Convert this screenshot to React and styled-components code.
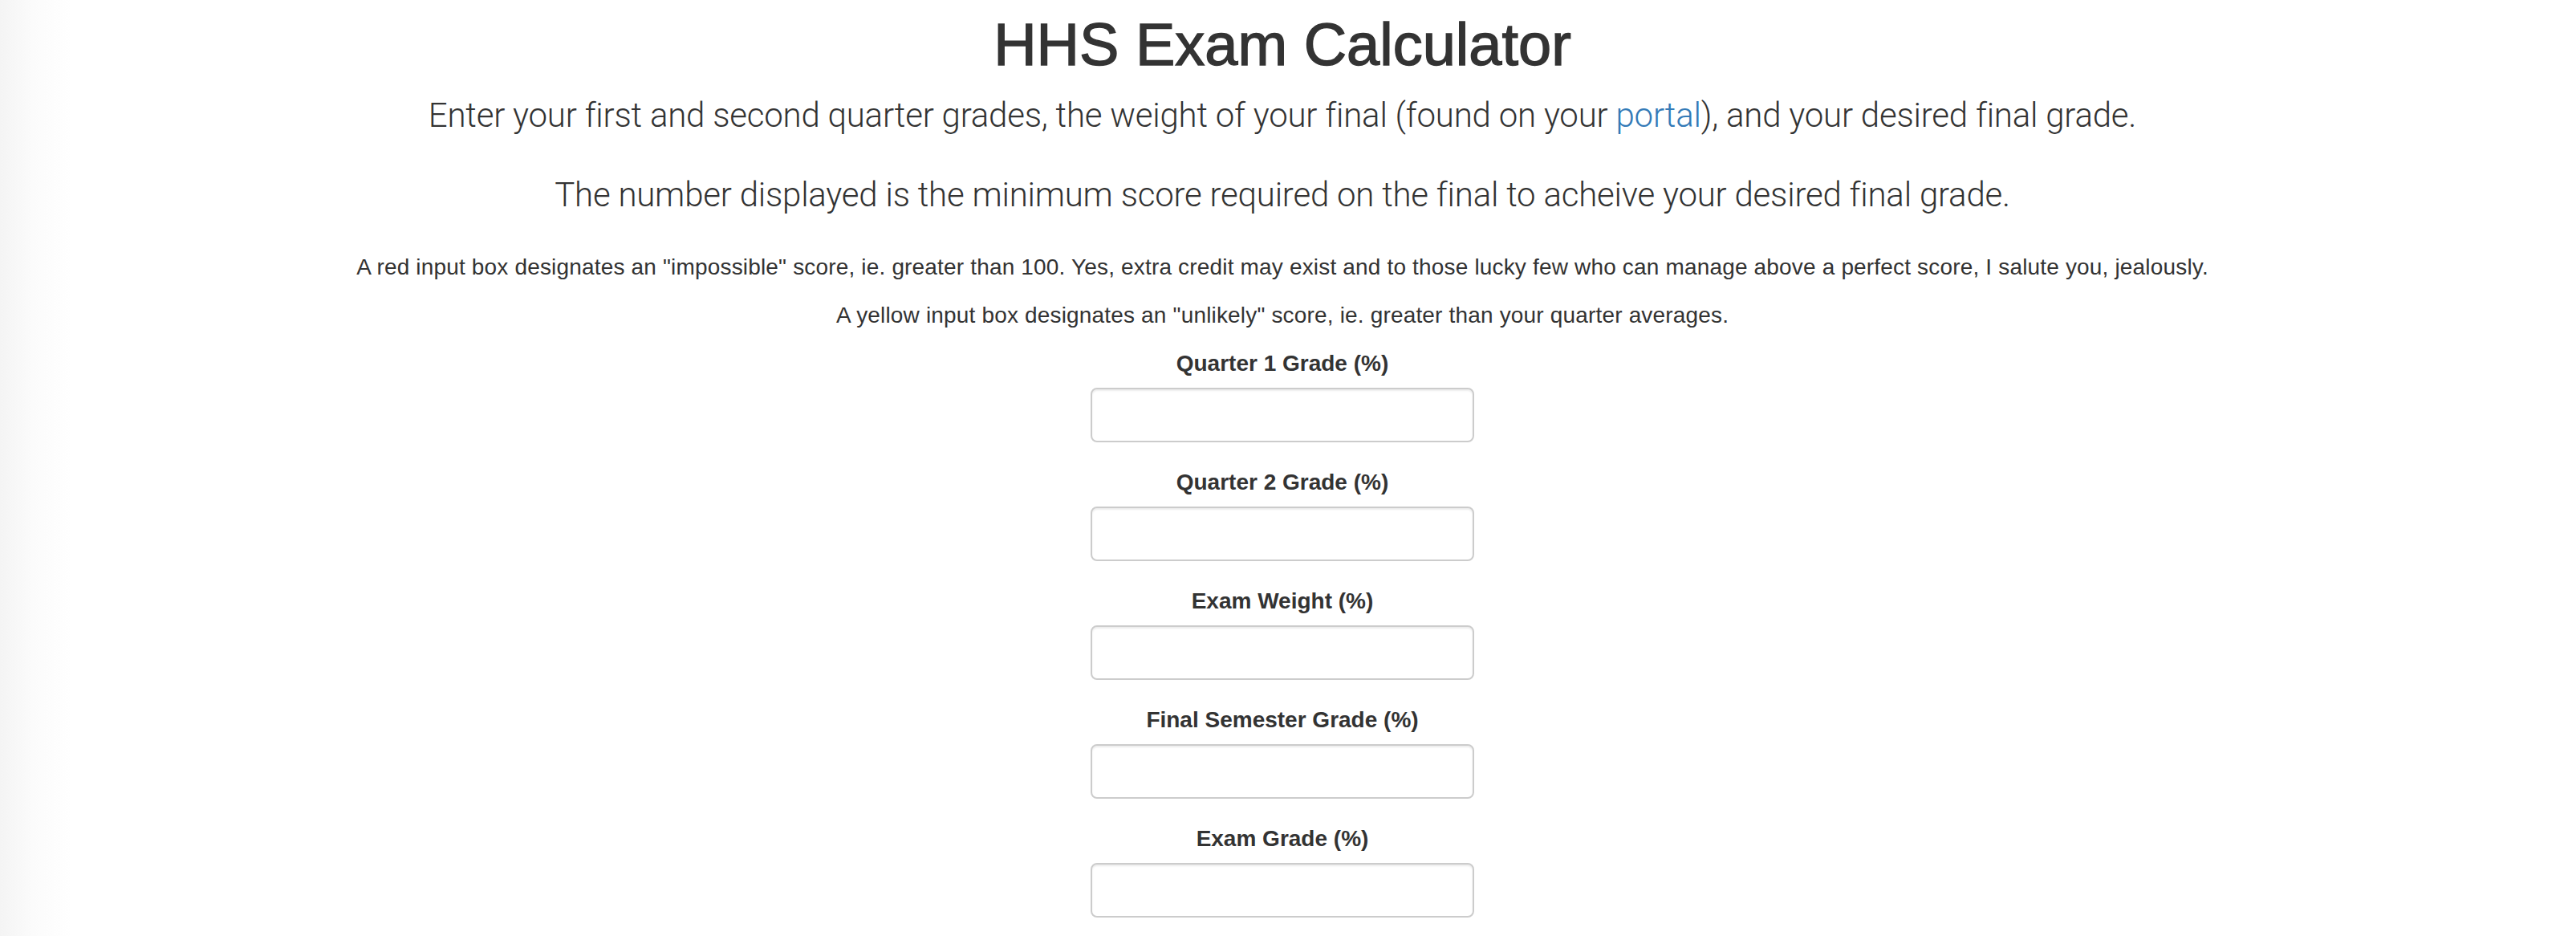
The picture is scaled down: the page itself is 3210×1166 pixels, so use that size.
import React from 'react'
import styled, {createGlobalStyle} from 'styled-components'

const GlobalStyle = createGlobalStyle`
    html, body {
        margin:0;
        padding:0;
    }
    body {
        font-family:"Liberation Sans", Arial, Helvetica, sans-serif;
        color:#333;
        background:linear-gradient(to right, #f4f4f4 0px, #fbfbfb 40px, #fff 90px);
        min-height:1166px;
    }
`

const fields = [
    'Quarter 1 Grade (%)',
    'Quarter 2 Grade (%)',
    'Exam Weight (%)',
    'Final Semester Grade (%)',
    'Exam Grade (%)',
]

const App = () => {
    return (
        <>
            <GlobalStyle />
            <Page>
                <Title>HHS Exam Calculator</Title>
                <Lead>
                    Enter your first and second quarter grades, the weight of your final (found on your <Link href="#">portal</Link>), and your desired final grade.
                </Lead>
                <Lead>
                    The number displayed is the minimum score required on the final to acheive your desired final grade.
                </Lead>
                <Note>
                    A red input box designates an "impossible" score, ie. greater than 100. Yes, extra credit may exist and to those lucky few who can manage above a perfect score, I salute you, jealously.
                </Note>
                <Note>
                    A yellow input box designates an "unlikely" score, ie. greater than your quarter averages.
                </Note>
                <Form>
                    {
                        fields.map(field => (
                            <FormGroup key={field}>
                                <Label>{field}</Label>
                                <Input type="text" />
                            </FormGroup>
                        ))
                    }
                </Form>
            </Page>
        </>
    )
}

const Page = styled.div`
    display:flex;
    flex-direction:column;
    align-items:center;
    text-align:center;
    padding:16px 14px 0 0;
`

const Title = styled.h1`
    margin:0 0 20px;
    font-size:74px;
    font-weight:400;
    line-height:79px;
    color:#333;
    -webkit-text-stroke:1.4px #333;
`

const Lead = styled.p`
    margin:0 0 40px;
    font-family:Roboto, "Liberation Sans", sans-serif;
    font-size:42px;
    font-weight:300;
    line-height:1.4;
    letter-spacing:-0.22px;
`

const Link = styled.a`
    color:#337ab7;
    text-decoration:none;
`

const Note = styled.p`
    margin:0 0 20px;
    font-size:28px;
    line-height:40px;
    letter-spacing:0.17px;
`

const Form = styled.form`
    display:flex;
    flex-direction:column;
    align-items:center;
`

const FormGroup = styled.div`
    display:flex;
    flex-direction:column;
    align-items:center;
    margin-bottom:30px;
`

const Label = styled.label`
    font-size:28px;
    font-weight:700;
    line-height:40px;
    margin-bottom:10px;
`

const Input = styled.input`
    box-sizing:border-box;
    width:478px;
    height:68px;
    padding:12px 24px;
    font-size:28px;
    border:2px solid #ccc;
    border-radius:8px;
    box-shadow:inset 0 2px 2px rgba(0, 0, 0, 0.075);
    background:#fff;
    outline:none;
`

export default App
